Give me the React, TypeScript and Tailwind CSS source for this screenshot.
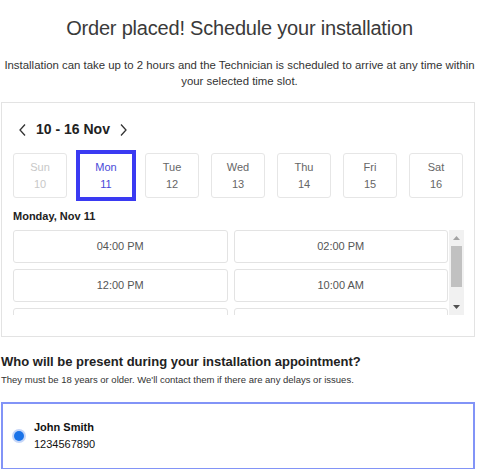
import React from 'react';

const days = [
  { d: 'Sun', n: 10, disabled: true },
  { d: 'Mon', n: 11, selected: true },
  { d: 'Tue', n: 12 },
  { d: 'Wed', n: 13 },
  { d: 'Thu', n: 14 },
  { d: 'Fri', n: 15 },
  { d: 'Sat', n: 16 },
];

// last row is only partly visible in the scroll area
const slots = ['04:00 PM', '02:00 PM', '12:00 PM', '10:00 AM', '', ''];

const App: React.FC = () => {
  return (
    <div className="w-[479px] h-[469px] overflow-hidden bg-white text-[#333] font-['Liberation_Sans',Arial,sans-serif]">
      <h1 className="pt-[15px] text-center text-[20px] leading-[26px] text-[#3a3a3a] tracking-[-0.2px]">Order placed! Schedule your installation</h1>
      <p className="mt-[16px] text-center text-[11.4px] leading-[16px] text-[#333]">
        Installation can take up to 2 hours and the Technician is scheduled to arrive at any time within your selected time slot.
      </p>

      <div className="mt-[13px] ml-px w-[474px] h-[235px] border border-[#e3e3e3] px-[11px]">
        <div className="flex items-center pt-[16px] pl-[5px] gap-[9px]">
          <svg width="9" height="14" viewBox="0 0 9 14" fill="none" stroke="#333" strokeWidth="1.3"><path d="M7 1.5 2 7l5 5.5" /></svg>
          <span className="text-[14px] font-bold text-[#222]">10 - 16 Nov</span>
          <svg width="9" height="14" viewBox="0 0 9 14" fill="none" stroke="#333" strokeWidth="1.3"><path d="M2 1.5 7 7l-5 5.5" /></svg>
        </div>

        <div className="mt-[13px] grid grid-cols-7 gap-[12px] w-[450px]">
          {days.map((x) => (
            <div
              key={x.d}
              className={
                'h-[45px] border flex flex-col items-center justify-center text-[11px] leading-[17px] ' +
                (x.selected
                  ? 'rounded-none border-[#3a3af2] outline-[3px] outline-solid outline-[#3a3af2] text-[#4a4ad8]'
                  : x.disabled
                  ? 'rounded-[3px] border-[#e6e6e6] text-[#c8c8c8]'
                  : 'rounded-[3px] border-[#e6e6e6] text-[#666]')
              }
            >
              <span>{x.d}</span>
              <span>{x.n}</span>
            </div>
          ))}
        </div>

        <div className="mt-[11px] text-[11px] font-bold text-[#222] leading-[14px]">Monday, Nov 11</div>

        <div className="mt-[7px] flex w-[451px] h-[85px]">
          <div className="flex-1 overflow-hidden">
            <div className="grid grid-cols-2 gap-x-[6px] gap-y-[6px] pr-[1px]">
              {slots.map((s, i) => (
                <div key={i} className="h-[33px] rounded-[3px] border border-[#e3e3e3] flex items-center justify-center text-[11px] text-[#555]">
                  {s}
                </div>
              ))}
            </div>
          </div>
          <div className="w-[15px] bg-[#f1f1f1] flex flex-col items-center">
            <div className="h-[16px] flex items-center justify-center">
              <svg width="7" height="4" viewBox="0 0 7 4"><path d="M0 4 3.5 0 7 4z" fill="#a3a3a3" /></svg>
            </div>
            <div className="w-[11px] h-[41px] bg-[#c1c1c1]" />
            <div className="flex-1" />
            <div className="h-[16px] flex items-center justify-center">
              <svg width="7" height="4" viewBox="0 0 7 4"><path d="M0 0h7L3.5 4z" fill="#505050" /></svg>
            </div>
          </div>
        </div>
      </div>

      <h2 className="mt-[16px] pl-px text-[13px] font-bold text-[#222] leading-[18px]">Who will be present during your installation appointment?</h2>
      <p className="mt-[2px] pl-px text-[9.5px] text-[#333] leading-[13px]">They must be 18 years or older. We&apos;ll contact them if there are any delays or issues.</p>

      <div className="mt-[16px] ml-px w-[474px] h-[68px] border-2 border-[#8294f7] flex items-center pl-[11px] gap-[10px]">
        <span className="w-[10px] h-[10px] rounded-full bg-[#1a73e8] ring-[2px] ring-[#c5d6f8]" />
        <div className="text-[11px] leading-[17px] text-[#111]">
          <div className="font-bold">John Smith</div>
          <div>1234567890</div>
        </div>
      </div>
    </div>
  );
};

export default App;
